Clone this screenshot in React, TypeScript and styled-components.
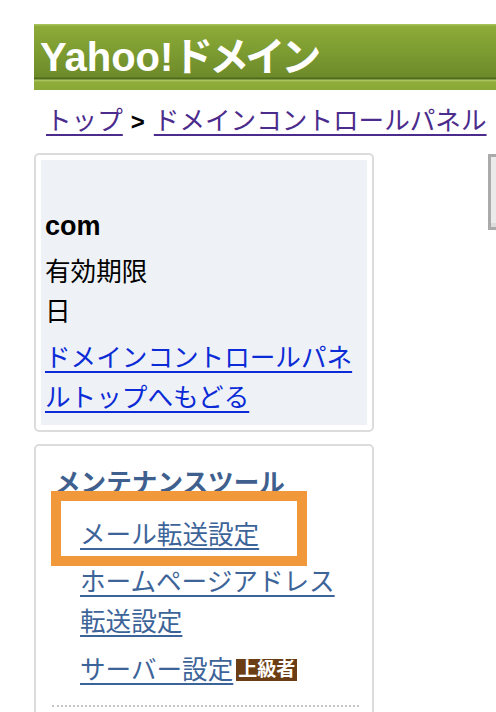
import React from 'react';
import styled, { createGlobalStyle } from "styled-components";

const GlobalStyle = createGlobalStyle`
  html, body {
    margin: 0;
    padding: 0;
    background: #ffffff;
    font-family: "Liberation Sans", "Noto Sans CJK JP", sans-serif;
  }
`

const Page = styled.div`
  width: 496px;
  height: 712px;
  overflow: hidden;
  padding: 24px 0 0 34px;
  box-sizing: border-box;
`

const Header = styled.div`
  width: 520px;
  height: 66px;
  box-sizing: border-box;
  background: linear-gradient(#a6c157 0, #a6c157 1px, #8dab38 2px, #7b9a30 30px, #6d8a2a 53px, #4e6a1d 54px, #4e6a1d 55px, #b3cb6b 56px, #8fad3a 58px, #8aa837 66px);
  display: flex;
  align-items: flex-start;
  padding: 10px 0 0 6px;
`

const Logo = styled.div`
  color: #ffffff;
  font-size: 40px;
  font-weight: bold;
  line-height: 46px;
  white-space: nowrap;
`

const LogoKana = styled.span`
  letter-spacing: -4px;
`

const Breadcrumb = styled.div`
  margin: 11px 0 0 12px;
  font-size: 25.6px;
  line-height: 40px;
  white-space: nowrap;
  color: #000000;
`

const CrumbLink = styled.a`
  color: #4b2b8c;
  text-decoration: underline;
  text-underline-offset: 4px;
  text-decoration-thickness: 2px;
`

const Sep = styled.span`
  font-weight: bold;
  font-size: 24px;
  margin: 0 9px 0 8px;
`

const Columns = styled.div`
  display: flex;
  align-items: flex-start;
  gap: 114px;
  margin-top: 11px;
`

const Side = styled.div`
  width: 340px;
  flex-shrink: 0;
  display: flex;
  flex-direction: column;
  gap: 12px;
`

const Panel = styled.div<{ $open?: boolean }>`
  border: 2px solid #dcdcdc;
  border-radius: 5px;
  padding: ${({ $open }) => ($open ? "0" : "5px")};
  box-sizing: border-box;
`

const InfoBox = styled.div`
  background: #eef2f6;
  padding: 46px 4px 7px 4px;
  font-size: 25.6px;
  line-height: 40px;
  color: #000000;
`

const DomainName = styled.div`
  font-weight: bold;
  font-size: 27px;
  margin-bottom: 6px;
`

const Line = styled.div``

const BackLink = styled.a`
  display: block;
  margin-top: 6px;
  color: #0b2bd6;
  text-decoration: underline;
  text-underline-offset: 4px;
  text-decoration-thickness: 2px;
`

const ToolBox = styled.div`
  padding: 29px 0 0 19px;
  height: 270px;
  font-size: 25.6px;
  line-height: 40px;
`

const ToolTitle = styled.div`
  color: #3f5f8f;
  font-weight: bold;
  line-height: 16px;
`

const ToolList = styled.div`
  margin-left: -4px;
  display: flex;
  flex-direction: column;
`

const ToolItem = styled.div<{ $active?: boolean }>`
  width: 256px;
  box-sizing: border-box;
  border-style: solid;
  border-color: ${({ $active }) => ($active ? "#f0983a" : "transparent")};
  border-width: ${({ $active }) => ($active ? "10px" : "0 10px")};
  padding: ${({ $active }) => ($active ? "14px 0 0 19px" : "0 0 8px 19px")};
  height: ${({ $active }) => ($active ? "75px" : "auto")};
  margin-bottom: ${({ $active }) => ($active ? "-4px" : "0")};
  white-space: nowrap;
`

const ToolLink = styled.a`
  color: #3d6499;
  text-decoration: underline;
  text-underline-offset: 4px;
  text-decoration-thickness: 2px;
`

const Badge = styled.span`
  display: inline-block;
  background: #6b3d14;
  color: #ffffff;
  font-weight: bold;
  font-size: 19px;
  line-height: 22px;
  padding: 0 2px;
  margin-left: 3px;
  vertical-align: 3px;
`

const Divider = styled.div`
  margin: 7px 0 0 -3px;
  width: 307px;
  border-top: 2px dotted #c4c4c4;
`

const SideWidget = styled.div`
  width: 40px;
  height: 76px;
  flex-shrink: 0;
  margin-top: 1px;
  box-sizing: border-box;
  border: 3px solid #aaaaaa;
  border-right: none;
  background: linear-gradient(#ebebeb 0, #ebebeb 66px, #dcdcdc 66px);
`

export default function App() {
  return (
    <Page>
      <GlobalStyle />
      <Header>
        <Logo>
          Yahoo!<LogoKana>ドメイン</LogoKana>
        </Logo>
      </Header>
      <Breadcrumb>
        <CrumbLink>トップ</CrumbLink>
        <Sep>&gt;</Sep>
        <CrumbLink>ドメインコントロールパネル</CrumbLink>
      </Breadcrumb>
      <Columns>
        <Side>
          <Panel>
            <InfoBox>
              <DomainName>com</DomainName>
              <Line>有効期限</Line>
              <Line>日</Line>
              <BackLink>ドメインコントロールパネルトップへもどる</BackLink>
            </InfoBox>
          </Panel>
          <Panel $open>
            <ToolBox>
              <ToolTitle>メンテナンスツール</ToolTitle>
              <ToolList>
                <ToolItem $active>
                  <ToolLink>メール転送設定</ToolLink>
                </ToolItem>
                <ToolItem>
                  <ToolLink>ホームページアドレス</ToolLink>
                  <br />
                  <ToolLink>転送設定</ToolLink>
                </ToolItem>
                <ToolItem>
                  <ToolLink>サーバー設定</ToolLink>
                  <Badge>上級者</Badge>
                </ToolItem>
              </ToolList>
              <Divider />
            </ToolBox>
          </Panel>
        </Side>
        <SideWidget />
      </Columns>
    </Page>
  );
}
